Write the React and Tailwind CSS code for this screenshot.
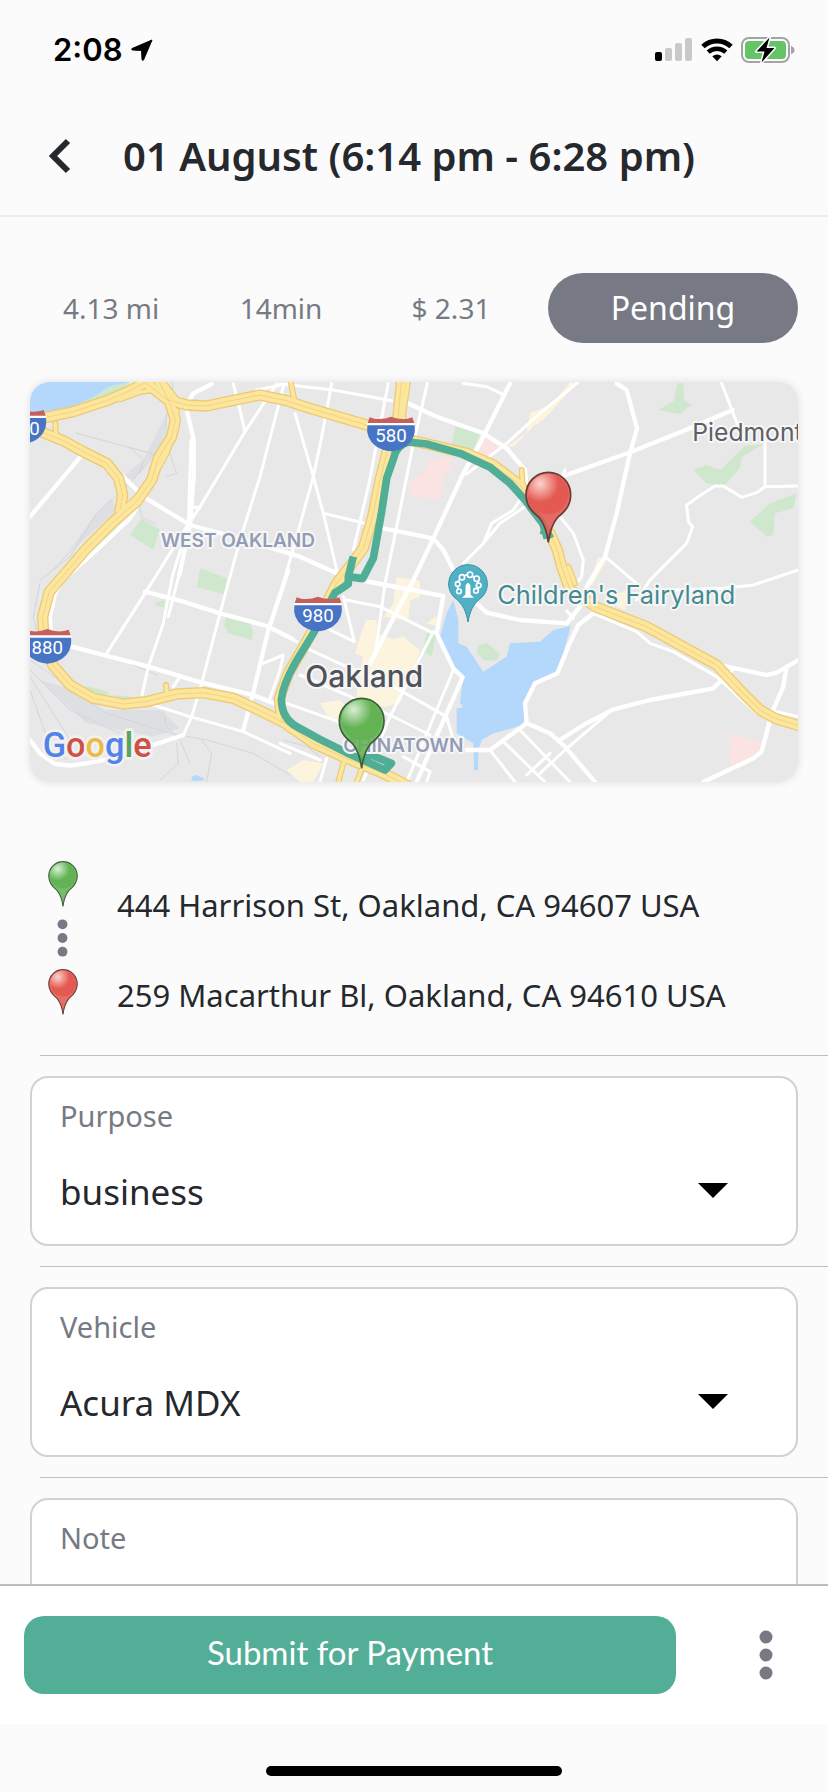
import React from "react";

const WATER = "#b3d8fc";

const highways = [
  "M20 150 L78 142 L160 125 L260 92 L330 62 L390 30",
  "M380 40 L440 88 L500 105 L560 108 L620 95 L720 75 L800 92 L860 112 L1040 165 L1180 212 L1340 250 L1420 285 L1500 345 L1530 390",
  "M60 184 L130 212 L190 245 L260 280 L296 325 L308 375 L300 420",
  "M415 30 L450 100 L466 150 L455 200 L415 265 L395 330 L350 395 L280 455 L200 535 L140 605 L88 665 L68 740 L72 800 L98 885 L150 945 L220 985 L310 1002 L380 995 L470 972 L550 968 L640 985 L720 1022 L800 1062 L880 1120 L980 1165 L1090 1210 L1160 1245",
  "M1145 30 L1134 140 L1100 250 L1080 330 L1058 440 L1030 535 L985 595 L950 640 L910 720 L860 815 L805 910 L778 985 L785 1050 L815 1075",
  "M1590 490 L1612 540 L1625 590 L1650 660 L1730 712 L1880 770 L1980 825 L2090 885 L2160 960 L2220 1020 L2265 1045 L2340 1068",
];

const ramps = [
  "M106 160 L108 195",
  "M400 60 L360 66 L300 88",
  "M425 30 L475 95 L520 112",
  "M470 120 L470 170 L440 250 L385 350 L300 425",
  "M812 36 L822 85",
  "M1165 30 L1150 130 L1150 180",
  "M1505 300 L1508 345",
  "M438 945 L440 965",
  "M970 1180 L955 1236",
  "M1028 1190 L1010 1236",
  "M1645 590 L1665 640",
];

const majorRoads = [
  "M30 440 L190 250 L310 320 L370 380 L510 465 L620 495 L780 542 L840 560 L955 612",
  "M575 42 L520 70 L498 110 L521 210 L521 320 L510 465 L478 615",
  "M155 830 L385 890 L545 938 L700 975 L760 1000",
  "M375 665 L480 692 L600 730 L740 768 L815 805",
  "M370 380 L330 445 L230 540 L130 630 L105 670 L90 740 L92 790",
  "M805 600 L745 780 L698 975 L670 1080",
  "M1470 40 L1380 220 L1330 310 L1240 505 L1180 630 L1050 880",
  "M1160 98 L1250 140 L1390 190 L1460 235 L1515 300 L1518 345",
  "M1620 322 L1835 245 L2010 175 L2138 120",
  "M1790 40 L1820 60 L1851 175 L1830 250 L1790 430 L1755 560 L1700 650",
  "M1020 630 L1270 678 L1250 790 L1300 895 L1328 922 L1240 1120 L1190 1236",
  "M1360 690 L1400 728 L1500 750 L1640 760 L1680 710",
  "M1720 730 L1675 765 L1645 830 L1612 910 L1545 940 L1515 1000 L1520 1060 L1410 1140 L1340 1140",
  "M1520 1060 L1590 1090 L1635 1130 L1725 1236",
  "M1620 1110 L1690 1065 L1780 1018 L1890 990 L2080 955 L2140 895",
  "M2100 885 L2240 915 L2270 908 L2335 870",
  "M2300 890 L2290 950 L2255 1030 L2225 1145 L2200 1165 L2050 1236",
  "M490 1095 L400 1125 L300 1160 L200 1180 L150 1187 L105 1182 L60 1150 L30 1110",
  "M1090 475 L1240 505 L1270 540 L1300 600",
];

const minorRoads = [
  "M513 210 L505 465 L458 615 L430 760 L385 890 L365 980",
  "M478 612 L445 740",
  "M770 42 L675 185 L540 410 L500 470 L400 630 L375 670 L260 850",
  "M640 42 L655 100 L675 185",
  "M515 412 L540 412",
  "M790 50 L720 320 L660 510 L630 620 L600 730 L545 940 L515 1040 L490 1095",
  "M710 60 L800 42",
  "M935 40 L905 200 L880 320 L830 500 L790 640",
  "M825 130 L880 320 L910 430 L955 620",
  "M780 42 L940 60 L1115 92",
  "M1105 40 L1045 350 L1000 540",
  "M1222 40 L1180 220 L1130 470 L1095 640 L1065 860",
  "M910 430 L1035 460",
  "M1330 40 L1400 50 L1450 74",
  "M1675 36 L1560 130 L1460 220 L1340 312",
  "M1500 390 L1480 420 L1415 460 L1390 520 L1330 580",
  "M1515 410 L1440 460 L1390 520",
  "M1595 330 L1625 330 L1635 300",
  "M2105 40 L2155 170",
  "M2235 200 L2235 350 L2335 348",
  "M2235 350 L2210 368 L2165 382 L2110 348 L2085 348 L2050 370 L2000 405 L2005 455 L2018 470 L2000 520 L1960 560 L1890 630 L1850 690",
  "M1620 440 L1660 490 L1690 570 L1685 620 L1660 650",
  "M1755 560 L1850 640",
  "M2335 600 L2200 645 L2110 655 L1960 660",
  "M1560 1210 L1635 1140 L1770 1025",
  "M1720 730 L1850 785 L1890 820 L1960 845 L2090 920 L2210 1030 L2300 1060",
  "M2255 1022 L2335 1040",
  "M1660 745 L1640 722",
  "M980 690 L1080 710 L1230 785 L1252 790",
  "M970 680 L1003 815 L860 745",
  "M1240 785 L1110 1040 L1030 1230",
  "M860 835 L980 890 L1130 955 L1280 1040 L1300 1110",
  "M840 915 L980 975 L1110 1035 L1230 1095",
  "M800 1000 L970 1060 L1060 1110",
  "M820 880 L900 700",
  "M780 790 L830 815",
  "M1300 900 L1160 1236",
  "M1150 1160 L1230 1205 L1220 1236",
  "M400 1005 L510 1040 L670 1085 L810 1150",
  "M780 1120 L900 1170",
  "M920 1165 L900 1236",
  "M1410 1140 L1485 1236",
  "M1450 1115 L1575 1236",
  "M1500 1080 L1650 1236",
  "M1520 1215 L1590 1150",
  "M480 920 L460 950",
  "M730 880 L790 855 L780 900 L750 985",
];

const rails = [
  "M170 190 L395 250 L420 300",
  "M330 232 L370 270 L360 310",
  "M440 130 L435 210 L470 310 L440 320",
  "M60 630 L150 560 L230 430 L330 340 L370 290",
  "M60 640 L40 740 L50 780",
  "M458 36 L458 60",
  "M350 380 L365 440 L410 465",
  "M30 870 L130 940 L260 1030 L450 1090 L560 1110 L700 1150 L810 1215",
  "M30 900 L150 1020 L300 1090",
  "M30 920 L100 1030 L150 1110",
  "M30 960 L80 1100 L140 1170",
  "M430 1020 L440 1070 L480 1110 L510 1180",
  "M545 1110 L575 1150 L560 1236",
  "M470 1120 L475 1180 L420 1230",
  "M260 850 L410 915",
  "M900 1160 L860 1130 L790 1110",
];

const railYards = [
  "440,130 430,210 395,270 340,330 310,320 370,270",
  "275,385 290,425 200,500 130,570 60,640 150,540 220,440",
  "60,930 130,950 250,1020 420,1020 480,1075 400,1100 200,1060",
];

const parks = [
  "225,78 270,48 322,38 350,48 300,72 200,108 150,115",
  "365,445 420,480 400,540 330,495",
  "540,595 620,625 612,672 530,652",
  "405,700 432,690 432,712 410,708",
  "617,740 690,760 700,785 695,810 625,790 612,768",
  "200,947 265,965 260,982 190,965",
  "285,975 335,980 330,990 285,986",
  "1305,170 1382,188 1360,240 1295,228",
  "1972,40 1990,40 1992,90 2015,105 1980,132 1915,120 1962,92",
  "2020,300 2060,285 2100,300 2175,228 2230,222 2165,262 2160,295 2110,348 2060,340",
  "2190,455 2250,400 2330,370 2320,415 2265,430 2260,495 2240,500",
  "1220,790 1250,785 1235,860 1210,842",
  "1375,825 1400,820 1440,850 1430,872 1390,870 1370,848",
];

const hospitals = [
  "1230,270 1295,260 1290,300 1265,330 1262,387 1222,387 1170,375 1165,335 1210,310",
  "1400,202 1440,230 1400,270 1360,255",
  "2126,1090 2226,1115 2220,1145 2130,1190",
];

const shops = [
  "1038,750 1070,750 1072,790 1120,808 1150,800 1200,840 1180,900 1140,1000 1090,1012 1010,980 1020,900 1030,860 1005,850 1020,800",
  "1130,622 1200,632 1200,680 1170,692 1165,750 1090,740 1120,700",
  "900,1000 960,990 1000,1030 1040,1050 1000,1080 930,1050",
  "800,1200 850,1170 910,1180 880,1236 840,1236",
  "1518,190 1530,130 1600,100 1650,36 1670,40 1570,150 1545,165 1480,230 1460,230",
  "1735,560 1760,570 1720,640 1700,660",
  "1220,760 1250,738 1250,768",
  "1750,690 1820,660 1815,720",
];

function Lines({ paths, stroke, width }) {
  return (
    <g fill="none" stroke={stroke} strokeWidth={width} strokeLinejoin="round" strokeLinecap="round">
      {paths.map((d) => (
        <path key={d} d={d} />
      ))}
    </g>
  );
}

function Areas({ shapes, fill }) {
  return (
    <g fill={fill}>
      {shapes.map((points) => (
        <polygon key={points} points={points} />
      ))}
    </g>
  );
}

function Shield({ x, y, label, labelX = 72 }) {
  return (
    <g transform={`translate(${x} ${y})`}>
      <path d="M8 2 L22 6 Q48 10 72 0 Q96 10 122 6 L136 2 L143 22 L1 22 Z" fill="#c5605c" />
      <path d="M0 19 H144 V27 H0 Z" fill="#fff" />
      <path d="M1 26 H143 Q148 66 118 88 Q98 102 72 104 Q46 102 26 88 Q-4 66 1 26 Z" fill="#4774c4" />
      <text x={labelX} y="76" textAnchor="middle" fontSize="56" fill="#fff" className="font-['Roboto',sans-serif]">
        {label}
      </text>
    </g>
  );
}

function MapLabel({ x, y, size, color, weight, children }) {
  return (
    <text
      x={x}
      y={y}
      fontSize={size}
      fontWeight={weight}
      fill={color}
      stroke="#f6f6f6"
      strokeWidth="12"
      strokeLinejoin="round"
      paintOrder="stroke"
      className="font-['Inter','Roboto',sans-serif]"
    >
      {children}
    </text>
  );
}

const PIN_COLORS = {
  green: { base: "#63b254", edge: "#3d5f38", shine: "#d8efd2" },
  red: { base: "#e45a52", edge: "#6b3a38", shine: "#fbd5d0" },
};

function PinShape({ color, id }) {
  const c = PIN_COLORS[color];
  return (
    <g>
      <defs>
        <radialGradient id={id} cx="0.3" cy="0.25" r="0.45">
          <stop offset="0" stopColor={c.shine} />
          <stop offset="1" stopColor={c.base} />
        </radialGradient>
      </defs>
      <path
        d="M70 213 C66 180 58 158 42 138 C22 122 3 104 3 70 A67 67 0 0 1 137 70 C137 104 118 122 98 138 C82 158 74 180 70 213 Z"
        fill={c.base}
        fillOpacity="0.88"
        stroke={c.edge}
        strokeWidth="5"
      />
      <circle cx="70" cy="68" r="61" fill={`url(#${id})`} />
    </g>
  );
}

function PinIcon({ color }) {
  return (
    <svg viewBox="0 0 140 216" className="h-[46px] w-[30px]" aria-hidden="true">
      <PinShape color={color} id={`list-pin-${color}`} />
    </svg>
  );
}

function RouteMap() {
  return (
    <svg
      viewBox="30 36 2304 1200"
      preserveAspectRatio="xMidYMid slice"
      className="block h-[400px] w-full"
      role="img"
      aria-label="Trip route map"
    >
      <rect x="30" y="36" width="2304" height="1200" fill="#e8e8e8" />
      <path d="M30 36 H330 L280 50 L235 78 L150 112 L78 126 L30 132 Z" fill={WATER} />
      <Areas shapes={railYards} fill="#dddfe2" />
      <Areas shapes={parks} fill="#cfe8cd" />
      <Areas shapes={hospitals} fill="#fae3e1" />
      <Areas shapes={shops} fill="#fcf4dc" />
      <polygon
        points="1300,690 1280,730 1260,800 1300,890 1330,920 1320,1000 1330,1012 1310,1015 1310,1090 1360,1120 1362,1200 1374,1200 1375,1140 1385,1110 1420,1090 1510,1065 1515,1000 1540,940 1560,928 1615,905 1635,830 1652,768 1600,780 1560,815 1470,820 1460,860 1390,905 1340,830 1315,820 1315,750"
        fill={WATER}
      />
      <polygon points="515,1220 530,1215 555,1228 545,1232 515,1232" fill={WATER} />
      <Lines paths={rails} stroke="#d3d5d8" width={3} />
      <Lines paths={minorRoads} stroke="#fff" width={9} />
      <Lines paths={majorRoads} stroke="#fff" width={13} />
      <Lines paths={ramps} stroke="#edca72" width={18} />
      <Lines paths={highways} stroke="#edca72" width={34} />
      <Lines paths={ramps} stroke="#fce69e" width={11} />
      <Lines paths={highways} stroke="#fce69e" width={26} />
      <Lines paths={highways} stroke="#f1d27f" width={3} />
      <path
        d="M1572 470 L1592 505 M1562 480 L1584 486 M1582 505 L1568 460 L1545 430 L1515 390 L1470 340 L1410 292 L1320 250 L1220 222 L1165 216 Q1130 225 1122 262 L1100 325 L1085 425 L1060 565 L1028 626 L985 620 L1000 560 M985 620 L985 642 L945 668 L880 790 L825 880 Q788 945 784 990 Q786 1045 830 1070 L900 1108 L980 1148 L1095 1200 L1114 1180 L1050 1154 L1030 1175"
        fill="none"
        stroke="#51ae96"
        strokeWidth="23"
        strokeLinejoin="round"
      />
      <Shield x={-65} y={118} label="80" labelX={93} />
      <Shield x={1041} y={140} label="580" />
      <Shield x={822} y={680} label="980" />
      <Shield x={10} y={777} label="880" />

      <g transform="translate(1284 582)">
        <path
          d="M60 174 C54 140 44 122 26 106 C10 94 2 78 2 60 A58 58 0 0 1 118 60 C118 78 110 94 94 106 C76 122 66 140 60 174 Z"
          fill="#4fb0c6"
          stroke="#3b8fa3"
          strokeWidth="3"
        />
        <g fill="none" stroke="#fff" strokeWidth="5">
          <path d="M32 80 Q22 58 38 42 Q60 22 82 42 Q98 58 88 80" />
          <g fill="#4fb0c6">
            <circle cx="33" cy="82" r="7" />
            <circle cx="29" cy="60" r="7" />
            <circle cx="42" cy="40" r="8" />
            <circle cx="66" cy="32" r="8" />
            <circle cx="86" cy="44" r="8" />
            <circle cx="92" cy="64" r="7" />
            <circle cx="84" cy="80" r="7" />
          </g>
        </g>
        <path d="M42 101 L52 92 L53 64 Q60 50 67 64 L68 92 L78 101 Z" fill="#fff" />
      </g>

      <MapLabel x={422} y={532} size={57} weight={600} color="#929cb5">WEST OAKLAND</MapLabel>
      <MapLabel x={2017} y={213} size={74} weight={400} color="#5c5f66">Piedmont</MapLabel>
      <MapLabel x={1432} y={703} size={76} weight={400} color="#438a92">Children's Fairyland</MapLabel>
      <MapLabel x={856} y={951} size={90} weight={500} color="#4f5259">Oakland</MapLabel>
      <MapLabel x={970} y={1146} size={57} weight={600} color="#929cb5">CHINATOWN</MapLabel>

      <text
        x="68"
        y="1160"
        fontSize="103"
        stroke="#f1f1f1"
        strokeWidth="16"
        strokeLinejoin="round"
        paintOrder="stroke"
        className="font-['Roboto',sans-serif] font-medium"
      >
        <tspan fill="#5383e6">G</tspan>
        <tspan fill="#cf5145">o</tspan>
        <tspan fill="#eebb41">o</tspan>
        <tspan fill="#5383e6">g</tspan>
        <tspan fill="#58a45c">l</tspan>
        <tspan fill="#cf5145">e</tspan>
      </text>

      <g transform="translate(955 982)">
        <PinShape color="green" id="map-pin-green" />
      </g>
      <g transform="translate(1515 304)">
        <PinShape color="red" id="map-pin-red" />
      </g>
    </svg>
  );
}

function StatusBar() {
  return (
    <div className="flex h-[100px] items-center justify-between pr-[33px] pl-[53px]">
      <div className="flex items-center gap-2">
        <span className="font-['Inter',sans-serif] text-[31px] leading-10 font-semibold text-black">2:08</span>
        <svg viewBox="0 0 22 22" className="size-[22px]" aria-hidden="true">
          <path d="M21 1 L12.5 21 Q11.5 22 11 20.5 L10.6 12 Q10.5 11.4 10 11.4 L1.5 11 Q0 10.500 1 9.600 Z" stroke="#000" strokeLinejoin="round" />
        </svg>
      </div>
      <div className="flex items-center gap-2">
        <svg viewBox="0 0 38 24" className="h-6 w-[38px]" aria-hidden="true">
          <rect x="0" y="14" width="7" height="9" rx="2" />
          <rect x="10" y="10" width="7" height="13" rx="2" fill="#c9c9c9" />
          <rect x="20" y="5" width="7" height="18" rx="2" fill="#c9c9c9" />
          <rect x="30" y="0" width="7" height="23" rx="2" fill="#c9c9c9" />
        </svg>
        <svg viewBox="0 0 32 24" className="h-6 w-8" fill="none" stroke="#000" aria-hidden="true">
          <path d="M2 8.500 A20.500 20.500 0 0 1 30 8.500" strokeWidth="5" />
          <path d="M7.200 14.200 A13 13 0 0 1 24.800 14.200" strokeWidth="4.500" />
          <path d="M11.300 18.300 Q16 14.500 20.700 18.300 L16 23.200 Z" fill="#000" stroke="none" />
        </svg>
        <svg viewBox="0 0 54 28" className="h-7 w-[54px]" aria-hidden="true">
          <rect x="1" y="2" width="47" height="24" rx="7" fill="#fff" stroke="#a3a3a5" strokeWidth="2" />
          <rect x="4" y="5" width="41" height="18" rx="4" fill="#65c466" />
          <path d="M50 10 Q53.500 11 53.500 14 T50 18 Z" fill="#a3a3a5" />
          <path d="M28.500 1.500 L15.500 15.500 H23.500 L20.500 26.500 L33.500 12 H25.500 Z" fill="#000" stroke="#fff" strokeWidth="3" strokeLinejoin="round" paintOrder="stroke" />
        </svg>
      </div>
    </div>
  );
}

function SelectCard({ id, label, options }) {
  return (
    <div className="mx-[30px] my-5 h-[170px] rounded-[18px] border-2 border-[#d1d1d6] bg-white px-7 pt-[18px]">
      <label htmlFor={id} className="block text-[29px] leading-10 text-[#777a84]">
        {label}
      </label>
      <div className="relative mt-[30px]">
        <select id={id} className="h-[52px] w-full appearance-none bg-transparent text-[35px] text-[#25282d]">
          {options.map((option) => (
            <option key={option}>{option}</option>
          ))}
        </select>
        <svg viewBox="0 0 30 15" className="pointer-events-none absolute top-[17px] right-10 h-[15px] w-[30px]" aria-hidden="true">
          <path d="M0 0 H30 L15 15 Z" />
        </svg>
      </div>
    </div>
  );
}

function Divider() {
  return <hr className="ml-10 border-t border-[#bfbfc3]" />;
}

function Dots({ className }) {
  return (
    <svg viewBox="0 0 14 50" className={className} fill="#777a84" aria-hidden="true">
      <circle cx="7" cy="7" r="6.500" />
      <circle cx="7" cy="25" r="6.500" />
      <circle cx="7" cy="43" r="6.500" />
    </svg>
  );
}

export default function App() {
  return (
    <div className="flex h-screen flex-col bg-[#fbfbfb] font-['Noto_Sans','Open_Sans',sans-serif] text-[#25282d]">
      <StatusBar />
      <header className="flex h-[117px] items-center gap-[52px] border-b-2 border-[#eeeeee] pb-1 pl-12">
        <button type="button" aria-label="Back">
          <svg viewBox="0 0 23 36" className="h-9 w-[23px]" fill="none" stroke="#25282d" strokeWidth="6" aria-hidden="true">
            <path d="M20 3 L5 18 L20 33" />
          </svg>
        </button>
        <h1 className="text-[40px] leading-[52px] font-semibold">01 August (6:14 pm - 6:28 pm)</h1>
      </header>

      <main className="min-h-0 flex-1 overflow-y-auto [scrollbar-width:none]">
        <div className="flex items-center gap-3 pt-14 pr-[30px] pl-[26px]">
          <div className="grid flex-1 grid-cols-3 text-center text-[28px] leading-10 text-[#777a84]">
            <span>4.13 mi</span>
            <span>14min</span>
            <span>$ 2.31</span>
          </div>
          <div className="flex h-[70px] w-[250px] items-center justify-center rounded-full bg-[#777a84] text-[32px] text-white">
            Pending
          </div>
        </div>

        <div className="mx-[30px] mt-[39px] overflow-hidden rounded-[20px] shadow-[0_0_8px_rgba(0,0,0,0.12)]">
          <RouteMap />
        </div>

        <div className="mt-[79px] mb-10 flex gap-[39px] pl-[47px]">
          <div className="flex w-[31px] flex-col items-center">
            <PinIcon color="green" />
            <Dots className="my-3 h-[38px] w-[11px]" />
            <PinIcon color="red" />
          </div>
          <div className="flex flex-col justify-end text-[31px] leading-10">
            <p className="mb-[50px]">444 Harrison St, Oakland, CA 94607 USA</p>
            <p>259 Macarthur Bl, Oakland, CA 94610 USA</p>
          </div>
        </div>

        <Divider />
        <SelectCard id="purpose" label="Purpose" options={["business", "personal"]} />
        <Divider />
        <SelectCard id="vehicle" label="Vehicle" options={["Acura MDX"]} />
        <Divider />
        <div className="mx-[30px] my-5 rounded-[18px] border-2 border-[#d1d1d6] bg-white px-7 pt-[18px]">
          <label htmlFor="note" className="block text-[29px] leading-10 text-[#777a84]">
            Note
          </label>
          <textarea id="note" className="mt-8 block h-[76px] w-full resize-none text-[35px] outline-none" />
        </div>
      </main>

      <footer>
        <div className="flex items-center border-t-2 border-[#bcbcbc] bg-white py-[30px] pl-6">
          <button
            type="button"
            className="h-[78px] flex-1 rounded-[20px] bg-[#53ae98] pb-1 font-['Lato',sans-serif] text-[33px] text-white"
          >
            Submit for Payment
          </button>
          <button type="button" aria-label="More options" className="ml-[78px] flex w-[74px]">
            <Dots className="ml-[5px] h-[50px] w-[14px]" />
          </button>
        </div>
        <div className="flex h-[68px] items-end justify-center pb-4">
          <div className="h-[10px] w-[296px] rounded-full bg-black" />
        </div>
      </footer>
    </div>
  );
}
